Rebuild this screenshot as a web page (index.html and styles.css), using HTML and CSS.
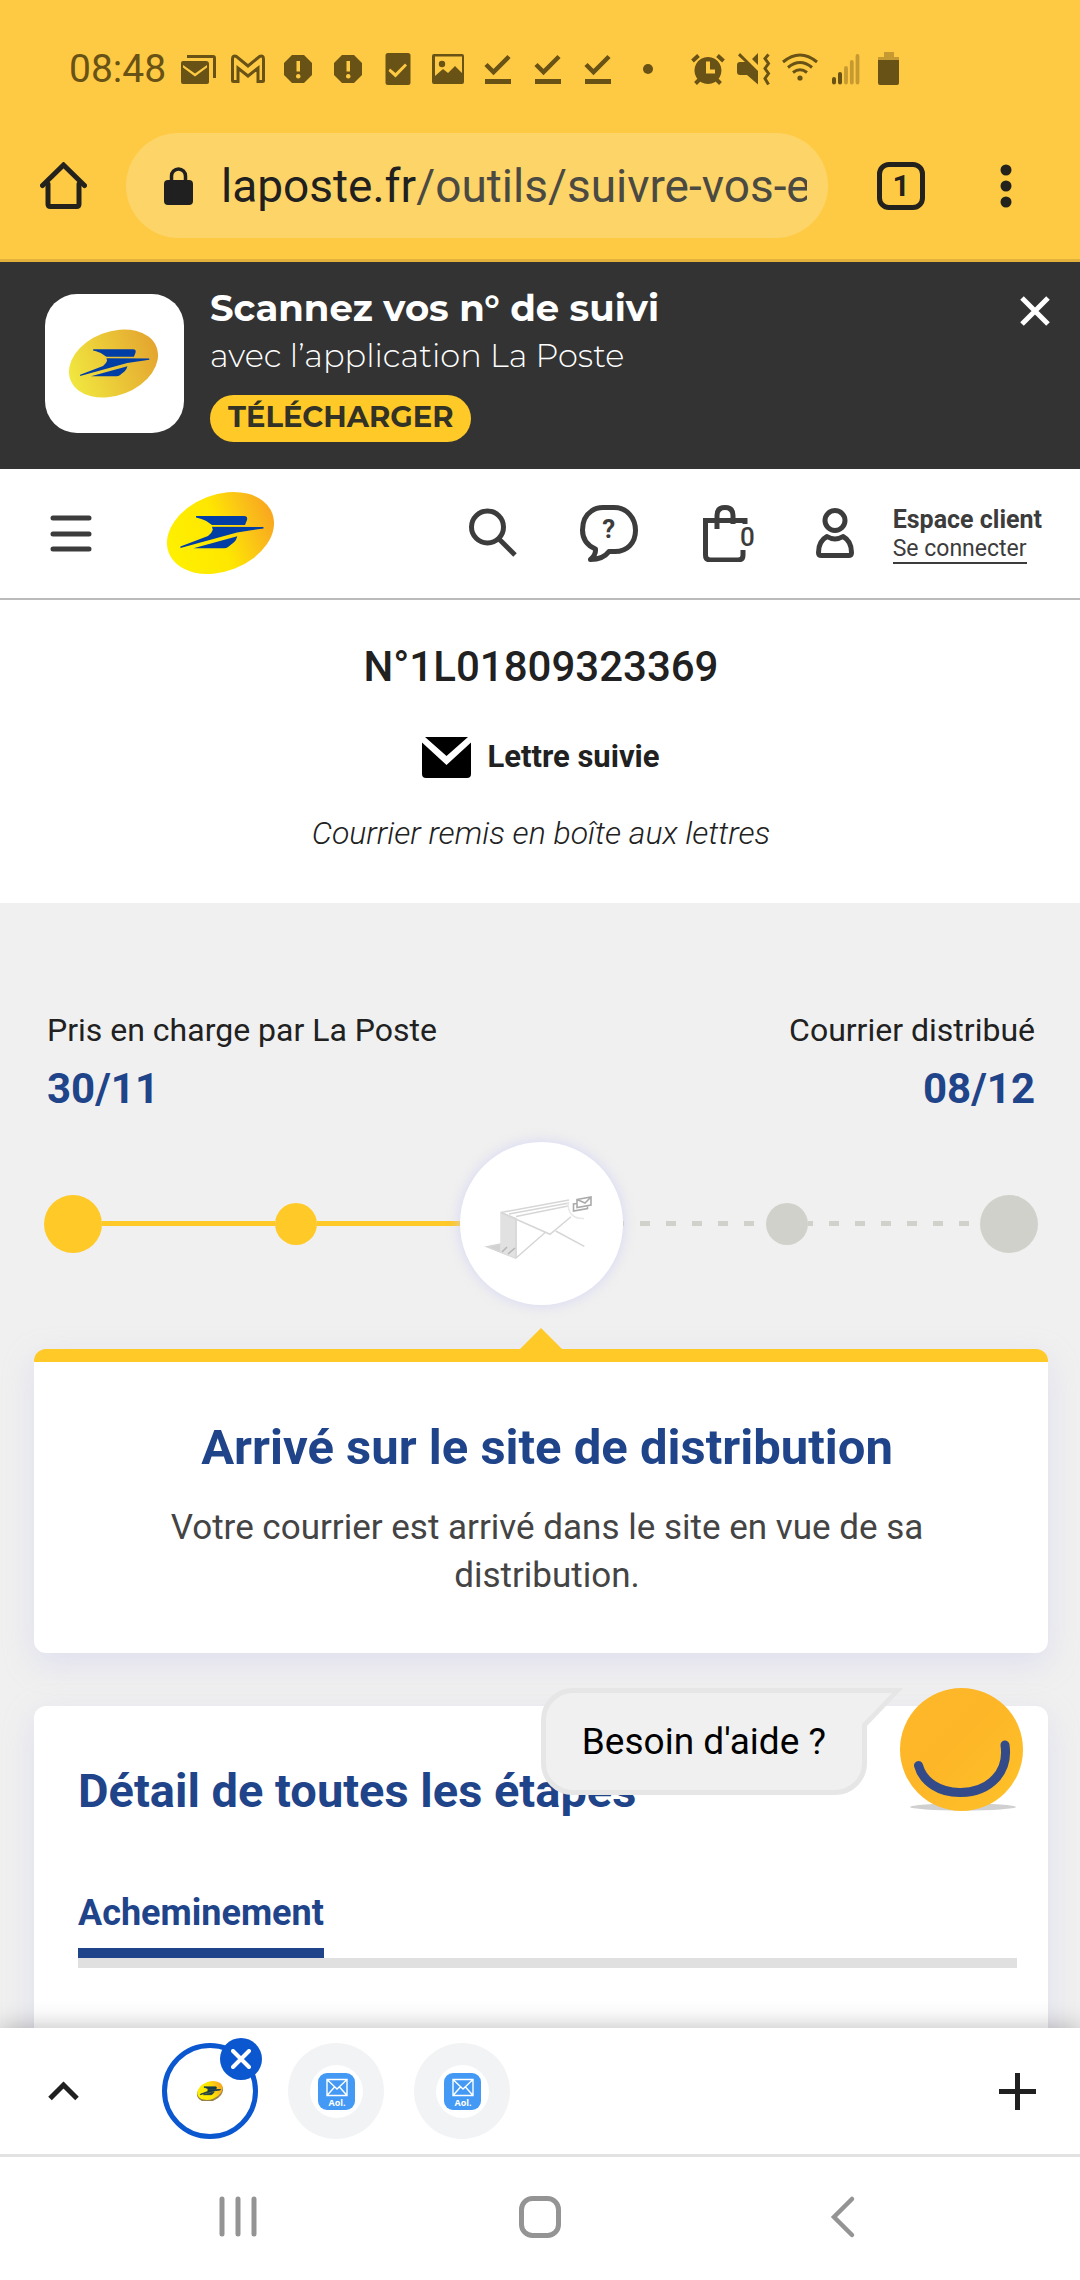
FILE: index.html
```html
<!DOCTYPE html>
<html lang="fr">
<head>
<meta charset="utf-8">
<meta name="viewport" content="width=device-width, initial-scale=1">
<title>Suivre vos envois - La Poste</title>
<link rel="stylesheet" href="styles.css">
</head>
<body>
<svg class="defs" width="0" height="0" aria-hidden="true">
  <defs>
    <linearGradient id="gold" x1="0" y1="0" x2="1" y2="0">
      <stop offset="0" stop-color="#fff000"/><stop offset=".5" stop-color="#fee600"/><stop offset=".75" stop-color="#fbc516"/><stop offset="1" stop-color="#f9a61f"/>
    </linearGradient>
    <linearGradient id="amber" x1="0" y1="0" x2="1" y2="0">
      <stop offset="0" stop-color="#f1e73f"/><stop offset="1" stop-color="#e4a52f"/>
    </linearGradient>
    <linearGradient id="face" x1="0" y1="0" x2="1" y2="1">
      <stop offset="0" stop-color="#fdb82a"/><stop offset=".45" stop-color="#fdb627"/><stop offset="1" stop-color="#ffc229"/>
    </linearGradient>
    <symbol id="bird" viewBox="0 0 107 82">
      <path d="M29 24h48q4 0 3 4l-2 5H45L40 29.500Q37 27.500 29 25.500z"/>
      <path d="M45 34.700L96.500 35v1.400L70 40.500 13.400 56v-1.600L41 44q4-3 4.800-6.200z"/>
      <path d="M70.300 44.200q-1 4-3.300 6L61 55q-1.500 1.200-4 1.200H26.500z"/>
    </symbol>
    <symbol id="done" viewBox="0 0 50 34">
      <path d="M13 12.500l7.500 7.500L36 4.500" fill="none" stroke="currentColor" stroke-width="4.500"/><path d="M12 27h26v5H12z"/>
    </symbol>
    <symbol id="alert" viewBox="0 0 50 34">
      <path fill-rule="evenodd" d="M19 3h12l8 8v12l-8 8H19l-8-8V11zM23.500 9v10.500h3.500V9zM25.200 22a2.300 2.300 0 1 0 .1 0z"/>
    </symbol>
    <symbol id="aol" viewBox="0 0 37 37">
      <rect width="37" height="37" rx="9" fill="#4399f3"/>
      <path d="M9 6.500h20v16H9zM9 6.500l10 9.500 10-9.500M9 22.500l7.500-8.500M29 22.500l-7.500-8.500" fill="none" stroke="#fff" stroke-width="1.400"/>
      <text x="19" y="32.500" text-anchor="middle" class="aol-label">Aol.</text>
    </symbol>
  </defs>
</svg>

<div class="screen">
  <div class="statusbar">
    <span class="clock">08:48</span>
    <div class="notifications" aria-hidden="true">
      <svg viewBox="0 0 50 34"><path d="M14 3h26q3 0 3 3v20h-3V6H14z"/><path fill-rule="evenodd" d="M10 9h23q3 0 3 3v18q0 2-2 2H10q-2 0-2-2V11q0-2 2-2zM10 13v2.500l12 9 12-9V13l-12 8.500z"/></svg>
      <svg viewBox="0 0 50 34"><path d="M9.500 28V7q0-4 4-2.500L25 14 36.500 4.500q4-1.500 4 2.500v21.500q0 1-1 1H35V16l-10 8-10-8v13.500h-4.500q-1 0-1-1z" fill="none" stroke="currentColor" stroke-width="3"/></svg>
      <svg><use href="#alert"/></svg>
      <svg><use href="#alert"/></svg>
      <svg viewBox="0 0 50 34"><path fill-rule="evenodd" d="M15 1h20q2.500 0 2.500 2.500v27q0 2.500-2.500 2.500H15q-2.500 0-2.500-2.500v-27Q12.500 1 15 1zM17 16.500l-1.500 2.500 7 6.500L34 13.500 32 11.500l-9.500 9.500z"/></svg>
      <svg viewBox="0 0 50 34"><path fill-rule="evenodd" d="M11 2h28q2 0 2 2v26q0 2-2 2H11q-2 0-2-2V4q0-2 2-2zM12 4.500v19.500l8-7 5 4 7-7 7 7V4.500z"/><circle cx="19" cy="12" r="3.200"/></svg>
      <svg><use href="#done"/></svg>
      <svg><use href="#done"/></svg>
      <svg><use href="#done"/></svg>
      <svg viewBox="0 0 50 34"><circle cx="25" cy="17" r="5"/></svg>
    </div>
    <div class="system" aria-hidden="true">
      <svg viewBox="0 0 46 34"><path fill-rule="evenodd" d="M23 5a13.500 13.500 0 1 1-.1 0zM21 9.500v12h9v-4h-5v-8z"/><path d="M7.500 9l6-5.500M38.500 9l-6-5.500M10.500 31.500l4-4M35.500 31.500l-4-4" stroke="currentColor" stroke-width="4"/></svg>
      <svg viewBox="0 0 46 34"><path d="M6 13q0-3 3-3h5L7 3.500 9 1l18 18v13.500L16 23H9q-3 0-3-3zM21 7l6-6v12z"/><path d="M37.500 2.500l-3.500 4 3.500 5-3.500 5 3.500 5-3.500 5 3.500 6" fill="none" stroke="currentColor" stroke-width="3"/></svg>
      <svg viewBox="0 0 46 34"><path d="M6 10q17-14 34 0M11 15.500q12-10 24 0M16 20.500q7-5.500 14 0" fill="none" stroke="currentColor" stroke-width="3"/><circle cx="23" cy="26" r="2.600"/></svg>
      <svg viewBox="0 0 46 34"><path d="M11 27v3.500M17 22v8.500" stroke="currentColor" stroke-width="4" stroke-linecap="round"/><path d="M23 16v14.500M28.800 10v20.500M34.500 4v26.500" stroke="#c69a30" stroke-width="3.800" stroke-linecap="round"/></svg>
      <svg viewBox="3 0 46 34"><path d="M18 0h10v5h5v3H12V5h6z" fill="#c69a30"/><path d="M12 8h21v23q0 2-2 2H14q-2 0-2-2z"/></svg>
    </div>
  </div>

  <div class="toolbar">
    <button class="plain" aria-label="Accueil"><svg width="47" height="47" viewBox="0 0 47 47" fill="none" stroke="#23221c" stroke-width="5" stroke-linecap="round" stroke-linejoin="round"><path d="M8 22v20q0 2.500 2.500 2.500h26q2.500 0 2.500-2.500V22"/><path d="M2.500 23.500L23.500 3l21 20.500" stroke-linejoin="miter"/></svg></button>
    <button class="address" aria-label="Adresse du site">
      <svg width="29" height="38" viewBox="0 0 29 38"><rect y="13" width="29" height="25" rx="4" fill="#202020"/><path d="M7.500 14V9a7 7 0 0 1 14 0v5" fill="none" stroke="#202020" stroke-width="3.500"/></svg>
      <span class="url"><span>laposte.fr</span><span class="path">/outils/suivre-vos-e</span></span>
    </button>
    <button class="plain tabcount" aria-label="Onglets">1</button>
    <button class="plain" aria-label="Menu du navigateur"><svg width="12" height="44" viewBox="0 0 12 44" fill="#23221c"><circle cx="6" cy="6" r="5.500"/><circle cx="6" cy="22" r="5.500"/><circle cx="6" cy="38" r="5.500"/></svg></button>
  </div>

  <div class="viewport">
    <aside class="promo">
      <div class="appicon"><svg width="89" height="69" viewBox="0 0 107 82"><ellipse cx="53.500" cy="41" rx="55.400" ry="38.400" transform="rotate(-21 53.500 41)" fill="url(#amber)"/><use href="#bird" fill="#003da5"/></svg></div>
      <div class="promo-text">
        <strong class="promo-title">Scannez vos n° de suivi</strong>
        <span class="promo-sub">avec l’application La Poste</span>
        <a class="download" href="#">TÉLÉCHARGER</a>
      </div>
      <button class="plain close" aria-label="Fermer"><svg width="30" height="30" viewBox="0 0 30 30"><path d="M2 2l26 26M28 2L2 28" stroke="#fff" stroke-width="5"/></svg></button>
    </aside>

    <header class="site">
      <button class="plain" aria-label="Menu"><svg width="42" height="40" viewBox="0 0 42 40"><path d="M3 5h36M3 21h36M3 36h36" stroke="#3c3c3c" stroke-width="5" stroke-linecap="round"/></svg></button>
      <a class="logo" href="#" aria-label="La Poste"><svg width="107" height="82" viewBox="0 0 107 82"><ellipse cx="53.500" cy="41" rx="55.400" ry="38.400" transform="rotate(-21 53.500 41)" fill="url(#gold)"/><use href="#bird" fill="#003da5"/></svg></a>
      <div class="tools">
        <button class="plain" aria-label="Rechercher"><svg width="58" height="58" viewBox="0 0 58 58" fill="none" stroke="#3c3c3c" stroke-width="5"><circle cx="23.500" cy="23" r="16"/><path d="M34.500 34.500L51 51"/></svg></button>
        <button class="plain help" aria-label="Aide"><svg width="58" height="58" viewBox="0 0 58 58" fill="none" stroke="#3c3c3c" stroke-width="5" stroke-linejoin="round"><path d="M23 3.500H34C47 3.500 55.500 14 55.500 26.500 55.500 39 47 47.500 35 47.500H29Q23 55.500 10.500 55.500 16 51 15.500 45 2.500 39.500 2.500 26 2.500 13 11.500 7 16 3.500 23 3.500z"/></svg><span class="mark">?</span></button>
        <a class="bag" href="#" aria-label="Panier"><svg width="58" height="58" viewBox="0 0 58 58" fill="none" stroke="#3c3c3c" stroke-width="5"><path d="M44 20v-3.500H4.500V51q0 5 5 5H37q5 0 5-5v-5M16 25V11.500q0-8 8-8t8 8V20"/></svg><span class="count">0</span></a>
        <a class="account" href="#"><svg width="38" height="50" viewBox="0 0 38 50" fill="none" stroke="#3c3c3c" stroke-width="5"><circle cx="19" cy="12.500" r="10"/><path d="M11 28.500q8 5 16 0 8.500 4.500 8.500 16 0 3-3 3h-27q-3 0-3-3 0-11.500 8.500-16z" stroke-linejoin="round"/></svg>
          <span class="account-text"><strong>Espace client</strong><span class="login">Se connecter</span></span></a>
      </div>
    </header>

    <section class="parcel">
      <h1>N°1L01809323369</h1>
      <p class="kind"><svg width="49" height="42" viewBox="0 0 49 42"><path d="M3 1h43L24.500 20zM0 6.500L24.500 29 49 6.500V38q0 4-4 4H4q-4 0-4-4z"/></svg>Lettre suivie</p>
      <p class="note">Courrier remis en boîte aux lettres</p>
    </section>

    <main>
      <div class="dates">
        <div><span>Pris en charge par La Poste</span><strong>30/11</strong></div>
        <div class="end"><span>Courrier distribué</span><strong>08/12</strong></div>
      </div>
      <div class="track">
        <i class="stop big"></i><i class="line"></i><i class="stop"></i><i class="line short"></i>
        <div class="current"><svg width="163" height="163" viewBox="0 0 163 163" fill="none" stroke="#d6d6d6" stroke-width="1.500"><path d="M27 104.700l14-2.700v7.500l15 6.700z" fill="#d2d2d2"/><path d="M41 70.500l15 6v39l-15-6z" fill="#e1e1e1" stroke="#e1e1e1"/><path d="M41 70.500l68-12.500M49 72l60-11M56 74.500l52-10.500M56 76.500v40M41 70.500L90 92.300 111 74.700M56 116L85.500 90.300M95.700 89l28.600 15.300"/><path d="M42 110l5-5M48 112l7-6" stroke="#b5b5b5"/><path d="M108 61q0 16 16 15.500" stroke="#e8e8e8"/><path d="M117 61.500l-3.500.5v7l14-2.500v-3M117 57.500l14-2.500v8l-14 2.500zM117 57.500l8 3.500 6-6" stroke="#aaa" stroke-width="1.600"/></svg></div>
        <i class="line todo short"></i><i class="stop off"></i><i class="line todo"></i><i class="stop big off"></i>
      </div>
      <section class="card status">
        <svg class="pointer" width="42" height="21" viewBox="0 0 42 21"><path d="M0 21L21 0l21 21z" fill="#ffc928"/></svg>
        <h2>Arrivé sur le site de distribution</h2>
        <p>Votre courrier est arrivé dans le site en vue de sa distribution.</p>
      </section>
      <section class="card details">
        <h2>Détail de toutes les étapes</h2>
        <div class="tablist"><button class="plain tab">Acheminement</button></div>
      </section>
    </main>

    <button class="plain chat">
      <span class="bubble">Besoin d'aide ?<svg class="tail" width="41" height="40" viewBox="0 0 41 40"><path d="M0 0h41L5 38v2H0z" fill="#e6e6e6"/><path d="M0 5h30L0 36z" fill="#f0f0f0"/></svg></span>
      <svg width="123" height="123" viewBox="0 0 123 123"><ellipse cx="63" cy="119" rx="53" ry="3.500" fill="#d0d0d0"/><circle cx="61.500" cy="61.500" r="61.500" fill="url(#face)"/><path d="M18.500 77.500C23 94 40 105 61 104.500 90 104 109 84 105 57" fill="none" stroke="#344b89" stroke-width="9" stroke-linecap="round"/></svg>
    </button>
  </div>

  <div class="tabstrip">
    <button class="plain" aria-label="Afficher les onglets"><svg width="31" height="20" viewBox="0 0 31 20"><path d="M2 17.500L15.500 4 29 17.500" fill="none" stroke="#202020" stroke-width="5"/></svg></button>
    <div class="grouped">
      <button class="plain favtab active" aria-label="La Poste"><svg width="26" height="20" viewBox="0 0 107 82"><ellipse cx="53.500" cy="45" rx="55.400" ry="38.400" transform="rotate(-21 53.500 45)" fill="#9a8046"/><ellipse cx="53.500" cy="39" rx="54" ry="36" transform="rotate(-21 53.500 39)" fill="url(#gold)"/><use href="#bird" fill="#173a4a" stroke="#173a4a" stroke-width="3"/></svg>
        <span class="badge"><svg width="20" height="20" viewBox="0 0 20 20"><path d="M2 2l16 16M18 2L2 18" stroke="#fff" stroke-width="4" stroke-linecap="round"/></svg></span></button>
      <button class="plain favtab" aria-label="Aol Mail"><span class="disc"><svg width="37" height="37"><use href="#aol"/></svg></span></button>
      <button class="plain favtab" aria-label="Aol Mail"><span class="disc"><svg width="37" height="37"><use href="#aol"/></svg></span></button>
    </div>
    <button class="plain add" aria-label="Nouvel onglet"><svg width="37" height="37" viewBox="0 0 37 37"><path d="M18.500 0v37M0 18.500h37" stroke="#202020" stroke-width="5"/></svg></button>
  </div>

  <nav class="sysnav">
    <button class="plain" aria-label="Récents"><svg width="44" height="44" viewBox="0 0 44 44"><path d="M6 4v35M22 4v35M38 4v35" stroke="#949494" stroke-width="5" stroke-linecap="round"/></svg></button>
    <button class="plain" aria-label="Écran d'accueil"><svg width="44" height="44" viewBox="0 0 44 44"><rect x="3.500" y="3.500" width="37" height="37" rx="11" fill="none" stroke="#949494" stroke-width="5"/></svg></button>
    <button class="plain" aria-label="Retour"><svg width="44" height="44" viewBox="0 0 44 44"><path d="M32 4L14 22l18 18" fill="none" stroke="#949494" stroke-width="4.500" stroke-linecap="round"/></svg></button>
  </nav>
</div>
</body>
</html>
```
FILE: styles.css
```css
* { box-sizing: border-box; }

body {
  margin: 0;
  font-family: Roboto, "Liberation Sans", sans-serif;
  color: #212121;
  background: #fff;
}

h1, h2, p { margin: 0; }
a { color: inherit; text-decoration: none; }
svg { display: block; flex: none; }
.defs { position: absolute; }

.plain {
  display: block;
  margin: 0;
  padding: 0;
  border: 0;
  background: none;
  font: inherit;
  color: inherit;
}

.screen {
  display: flex;
  flex-direction: column;
  height: 100vh;
  overflow: hidden;
}

/* Android status bar */
.statusbar {
  display: flex;
  align-items: center;
  height: 112px;
  padding: 26px 0 0 69px;
  background: #ffca43;
  color: #685216;
}
.statusbar svg { height: 34px; fill: currentColor; }
.clock { width: 104px; font-size: 39px; line-height: 48px; }
.notifications, .system { display: flex; }
.notifications svg { width: 50px; }
.system { margin-left: 12px; }
.system svg { width: 46px; }

/* Browser toolbar */
.toolbar {
  display: flex;
  align-items: center;
  height: 150px;
  padding: 0 68px 0 40px;
  background: #ffca43;
  border-bottom: 3px solid #e3b23d;
}
.address {
  display: flex;
  flex: 1;
  align-items: center;
  gap: 28px;
  min-width: 0;
  height: 105px;
  margin: 0 49px 0 39px;
  padding: 0 21px 0 38px;
  border: 0;
  border-radius: 53px;
  background: #fdd468;
  font: 46px/60px Roboto, "Liberation Sans", sans-serif;
  color: #202020;
}
.url {
  display: flex;
  flex: 1;
  min-width: 0;
  overflow: hidden;
  white-space: nowrap;
}
.path { color: #4b4a42; }
.tabcount {
  width: 48px;
  height: 48px;
  margin-right: 75px;
  border: 5px solid #23221c;
  border-radius: 12px;
  font-size: 30px;
  font-weight: 700;
  line-height: 36px;
  color: #23221c;
}

/* Page area */
.viewport {
  position: relative;
  display: flex;
  flex: 1;
  flex-direction: column;
  min-height: 0;
  overflow: hidden;
}

.promo {
  display: flex;
  flex: none;
  align-items: flex-start;
  gap: 26px;
  height: 207px;
  padding: 22px 30px 0 45px;
  background: #333;
  color: #fff;
  font-family: Montserrat, Inter, "Open Sans", sans-serif;
}
.appicon {
  display: flex;
  align-items: center;
  justify-content: center;
  width: 139px;
  height: 139px;
  margin-top: 10px;
  padding-right: 2px;
  border-radius: 32px;
  background: #fff;
}
.promo-text {
  display: flex;
  flex: 1;
  flex-direction: column;
  align-items: flex-start;
}
.promo-title { font-size: 37px; line-height: 48px; }
.promo-sub { font-size: 32px; line-height: 48px; font-weight: 300; }
.download {
  margin-top: 15px;
  padding: 0 18px 3px;
  border-radius: 24px;
  background: #ffc928;
  font-size: 29px;
  font-weight: 700;
  line-height: 44px;
  color: #333226;
}
.close { margin-top: 12px; }

.site {
  display: flex;
  flex: none;
  align-items: center;
  height: 131px;
  padding: 0 38px 1px 50px;
  border-bottom: 2px solid #bbb;
  color: #3c3c3c;
}
.logo { margin-left: 75px; }
.tools {
  display: flex;
  align-items: center;
  margin-left: auto;
}
.help, .bag { position: relative; }
.help { margin: 0 63px 0 58px; }
.mark {
  position: absolute;
  inset: 0;
  font-size: 26px;
  font-weight: 700;
  line-height: 50px;
  text-align: center;
}
.count {
  position: absolute;
  top: 17px;
  right: 4px;
  font-size: 26px;
  font-weight: 500;
  line-height: 32px;
}
.account {
  display: flex;
  align-items: center;
  gap: 39px;
  margin-left: 57px;
}
.account-text {
  display: flex;
  flex-direction: column;
  padding-top: 2px;
  font-size: 25px;
  line-height: 30px;
}
.login {
  align-self: flex-start;
  border-bottom: 2px solid #3c3c3c;
  font-size: 23px;
  line-height: 27px;
}

.parcel {
  flex: none;
  height: 303px;
  padding: 42px 0 0 2px;
  text-align: center;
}
.parcel h1 { font-size: 42px; font-weight: 500; line-height: 50px; }
.kind {
  display: flex;
  align-items: center;
  justify-content: center;
  gap: 16px;
  margin-top: 42px;
  font-size: 31px;
  font-weight: 700;
  line-height: 46px;
}
.note {
  margin-top: 32px;
  font-size: 32px;
  font-style: italic;
  font-weight: 300;
  line-height: 42px;
}

main { flex: none; padding: 106px 32px 0 34px; background: #f0f0f0; }

.dates {
  display: flex;
  justify-content: space-between;
  padding: 0 13px;
}
.dates div { display: flex; flex-direction: column; }
.dates .end { align-items: flex-end; }
.dates span { font-size: 32px; line-height: 42px; }
.dates strong { margin-top: 13px; font-size: 42px; line-height: 50px; color: #1f4489; }

.track {
  display: flex;
  align-items: center;
  height: 163px;
  margin-top: 28px;
  padding: 0 10px;
}
.stop { flex: none; width: 42px; height: 42px; border-radius: 50%; background: #ffc928; }
.stop.big { width: 58px; height: 58px; }
.stop.off { background: #d0d1ca; }
.line { flex: 173; height: 5px; background: #ffc928; }
.line.short { flex: 143; }
.line.todo {
  flex: 172;
  background: repeating-linear-gradient(90deg, #d0d1ca 0 5px, transparent 5px 21px, #d0d1ca 21px 26px);
}
.line.todo.short {
  flex: 144;
  background: repeating-linear-gradient(90deg, #d0d1ca 0 1px, transparent 1px 17px, #d0d1ca 17px 26px);
}
.current { flex: none; border-radius: 50%; background: #fff; box-shadow: 0 0 10px 3px rgba(205, 208, 245, .5); }

.card {
  position: relative;
  border-radius: 12px;
  background: #fff;
  box-shadow: 0 10px 30px rgba(190, 192, 235, .35);
}
.card h2 { font-size: 47px; line-height: 60px; color: #1f4489; }
.status {
  margin-top: 44px;
  padding: 56px 90px 53px 102px;
  border-top: 13px solid #ffc928;
  text-align: center;
}
.card.status h2 { font-size: 49px; }
.status p {
  margin-top: 26px;
  font-size: 35px;
  line-height: 48px;
  color: #444;
}
.pointer { position: absolute; bottom: 100%; left: 50%; margin: 0 0 13px -21px; }
.details { margin-top: 53px; padding: 55px 31px 120px 44px; }
.tablist { display: flex; margin-top: 70px; border-bottom: 10px solid #e0e0e0; }
.tab {
  padding-bottom: 13px;
  border-bottom: 10px solid #1f4489;
  font-size: 36px;
  font-weight: 700;
  line-height: 44px;
  color: #1f4489;
}

/* Help assistant, floating over the page */
.chat {
  position: absolute;
  right: 57px;
  bottom: 217px;
  display: flex;
  gap: 33px;
}
.bubble {
  position: relative;
  height: 107px;
  padding: 0 36px;
  border: 5px solid #e6e6e6;
  border-radius: 32px 0 32px 32px;
  background: #f0f0f0;
  font-size: 37px;
  line-height: 98px;
  color: #000;
}
.tail { position: absolute; top: -5px; left: 100%; }

/* Grouped browser tabs */
.tabstrip {
  position: relative;
  display: flex;
  align-items: center;
  height: 129px;
  padding: 0 44px 0 48px;
  border-bottom: 3px solid #e2e2e2;
  background: #fff;
  box-shadow: 0 0 24px rgba(0, 0, 0, .28);
}
.grouped { display: flex; gap: 30px; margin-left: 83px; }
.favtab {
  position: relative;
  display: flex;
  align-items: center;
  justify-content: center;
  width: 96px;
  height: 96px;
  border-radius: 50%;
  background: #f2f3f5;
}
.favtab.active { border: 5px solid #0b57d0; background: #fff; }
.badge {
  position: absolute;
  top: -10px;
  right: -9px;
  display: flex;
  align-items: center;
  justify-content: center;
  width: 42px;
  height: 42px;
  border-radius: 50%;
  background: #0b57d0;
}
.disc { padding: 8px; border-radius: 50%; background: #fff; }
.aol-label { font: 700 9px "Open Sans", sans-serif; fill: #fff; }
.add { margin-left: auto; }

.sysnav {
  position: relative;
  display: flex;
  align-items: center;
  justify-content: center;
  gap: 258px;
  height: 123px;
  padding-bottom: 3px;
  background: #fff;
}
```
